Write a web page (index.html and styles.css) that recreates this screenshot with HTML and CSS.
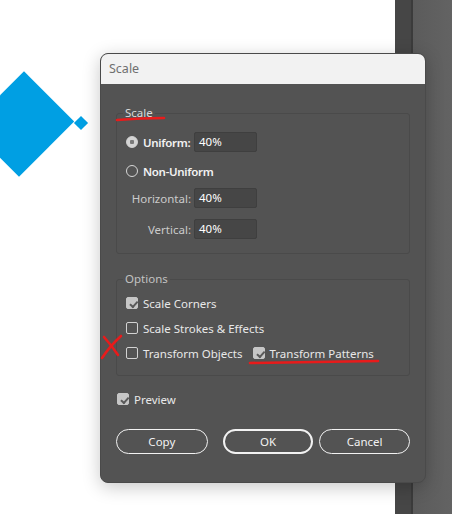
FILE: index.html
```html
<!DOCTYPE html>
<html lang="en">
<head>
    <meta charset="UTF-8">
    <meta name="viewport" content="width=device-width, initial-scale=1.0">
    <title>Scale</title>
    <link rel="stylesheet" href="styles.css">
</head>
<body>
    <div class="workspace">
        <div class="canvas">
            <div class="shape"></div>
            <div class="shape-handle"></div>
        </div>
        <div class="panel-edge"></div>
        <div class="panel-line"></div>
        <div class="panel"></div>
    </div>

    <div class="dialog">
        <div class="dialog-title">Scale</div>
        <div class="dialog-body">
            <fieldset class="group">
                <legend class="legend-scale">Scale</legend>
                <div class="row row-uniform">
                    <span class="label strong"><span class="radio checked"></span>Uniform:</span>
                    <span class="field">40%</span>
                </div>
                <div class="row row-nonuniform">
                    <span class="label strong"><span class="radio"></span>Non-Uniform</span>
                </div>
                <div class="row row-horizontal">
                    <span class="label dim right">Horizontal:</span>
                    <span class="field">40%</span>
                </div>
                <div class="row row-vertical">
                    <span class="label dim right">Vertical:</span>
                    <span class="field">40%</span>
                </div>
            </fieldset>

            <fieldset class="group options">
                <legend class="legend-options">Options</legend>
                <div class="check-row"><span class="box checked"></span>Scale Corners</div>
                <div class="check-row"><span class="box"></span>Scale Strokes &amp; Effects</div>
                <div class="check-row">
                    <span class="box"></span>Transform Objects
                    <span class="box checked second"></span>Transform Patterns
                </div>
            </fieldset>

            <div class="check-row preview"><span class="box checked"></span>Preview</div>

            <div class="buttons">
                <button class="btn">Copy</button>
                <button class="btn primary">OK</button>
                <button class="btn cancel">Cancel</button>
            </div>
        </div>
    </div>

    <svg class="marks" width="452" height="514" viewBox="0 0 452 514">
        <path d="M117 120 Q140 118 164 118" />
        <path d="M121 336 Q110 346 102 358" />
        <path d="M104 337 Q112 346 118 355" />
        <path d="M250 363 Q315 362 378 361" />
    </svg>
</body>
</html>
```

FILE: styles.css
```css
* {
    box-sizing: border-box;
}
body {
    margin: 0;
    width: 452px;
    height: 514px;
    overflow: hidden;
    font-family: "Noto Sans", "Open Sans", sans-serif;
    font-size: 11.5px;
}
.workspace {
    display: flex;
    height: 514px;
}
.canvas {
    flex: 0 0 395px;
    background: #ffffff;
    position: relative;
    overflow: hidden;
}
.shape {
    position: absolute;
    left: -14px;
    top: 85px;
    width: 71px;
    height: 78px;
    background: #009fe3;
    transform: rotate(45deg);
}
.shape-handle {
    position: absolute;
    left: 76px;
    top: 118px;
    width: 10px;
    height: 10px;
    background: #009fe3;
    transform: rotate(45deg);
}
.panel-edge {
    flex: 0 0 16px;
    background: #464646;
}
.panel-line {
    flex: 0 0 2px;
    background: #3b3b3b;
}
.panel {
    flex: 1;
    background: linear-gradient(to right, #5b5b5b, #636363);
}

.dialog {
    position: absolute;
    left: 100px;
    top: 53px;
    width: 326px;
    height: 430px;
    border-radius: 8px;
    overflow: hidden;
    background: #535353;
    border: 1px solid #4a4a4a;
    box-shadow: 0 4px 18px rgba(0, 0, 0, 0.22);
}
.dialog-title {
    height: 30px;
    line-height: 30px;
    padding-left: 8px;
    background: #f2f2f2;
    color: #6f6f6f;
    font-size: 12.5px;
}
.dialog-body {
    padding: 21px 15px 0 15px;
}

.group {
    margin: 0;
    padding: 11px 9px 14px 9px;
    border: 1px solid #4a4a4a;
    border-radius: 3px;
}
.group legend {
    margin-left: -3px;
    padding: 0 2px;
    line-height: 16px;
}
.legend-scale {
    color: #d9d9d9;
}
.legend-options {
    color: #c2c2c2;
}
.row {
    display: flex;
    align-items: center;
    height: 20px;
}
.row-nonuniform {
    margin-top: 9px;
}
.row-horizontal {
    margin-top: 7px;
}
.row-vertical {
    margin-top: 11px;
}
.label {
    display: flex;
    align-items: center;
    width: 65px;
    white-space: nowrap;
}
.label.strong {
    color: #f2f2f2;
    font-weight: 600;
    letter-spacing: -0.3px;
}
.label.dim {
    color: #cbcbcb;
}
.label.right {
    justify-content: flex-end;
}
.radio {
    width: 12px;
    height: 12px;
    margin-right: 5px;
    border: 1px solid #d6d6d6;
    border-radius: 50%;
    flex: 0 0 12px;
}
.radio.checked {
    background: radial-gradient(circle, #7a7a7a 0 2px, #d4d4d4 2.5px);
    border-color: #d4d4d4;
}
.field {
    margin-left: 3px;
    width: 63px;
    height: 20px;
    line-height: 18px;
    padding-left: 4px;
    background: #464646;
    border: 1px solid #3f3f3f;
    border-radius: 2px;
    color: #ffffff;
}

.options {
    margin-top: 17px;
    padding-top: 8px;
}
.check-row {
    display: flex;
    align-items: center;
    height: 16px;
    color: #e8e8e8;
    white-space: nowrap;
}
.check-row + .check-row {
    margin-top: 9px;
}
.box {
    width: 12px;
    height: 12px;
    margin-right: 5px;
    border: 1px solid #d2d2d2;
    border-radius: 2px;
    flex: 0 0 12px;
}
.box.checked {
    background: #c6c6c6;
    border-color: #c6c6c6;
    position: relative;
}
.box.checked::after {
    content: "";
    position: absolute;
    left: 2px;
    top: 1px;
    width: 6px;
    height: 3px;
    border-left: 2px solid #5a5a5a;
    border-bottom: 2px solid #5a5a5a;
    transform: rotate(-48deg) translate(-1px, 2px);
}
.box.second {
    margin-left: 10px;
}
.preview {
    margin-top: 15px;
    margin-left: 1px;
}

.buttons {
    display: flex;
    margin-top: 22px;
}
.btn {
    height: 25px;
    width: 92px;
    border: 1.5px solid #f2f2f2;
    border-radius: 13px;
    background: transparent;
    color: #f2f2f2;
    font-family: "Noto Sans", "Open Sans", sans-serif;
    font-size: 11.5px;
    padding: 0;
}
.btn.primary {
    width: 91px;
    margin-left: 15px;
    border-width: 2px;
}
.btn.cancel {
    width: 91px;
    margin-left: 6px;
}

.marks {
    position: absolute;
    left: 0;
    top: 0;
    pointer-events: none;
}
.marks path {
    fill: none;
    stroke: #e81b1b;
    stroke-width: 2.6;
    stroke-linecap: round;
}
```
